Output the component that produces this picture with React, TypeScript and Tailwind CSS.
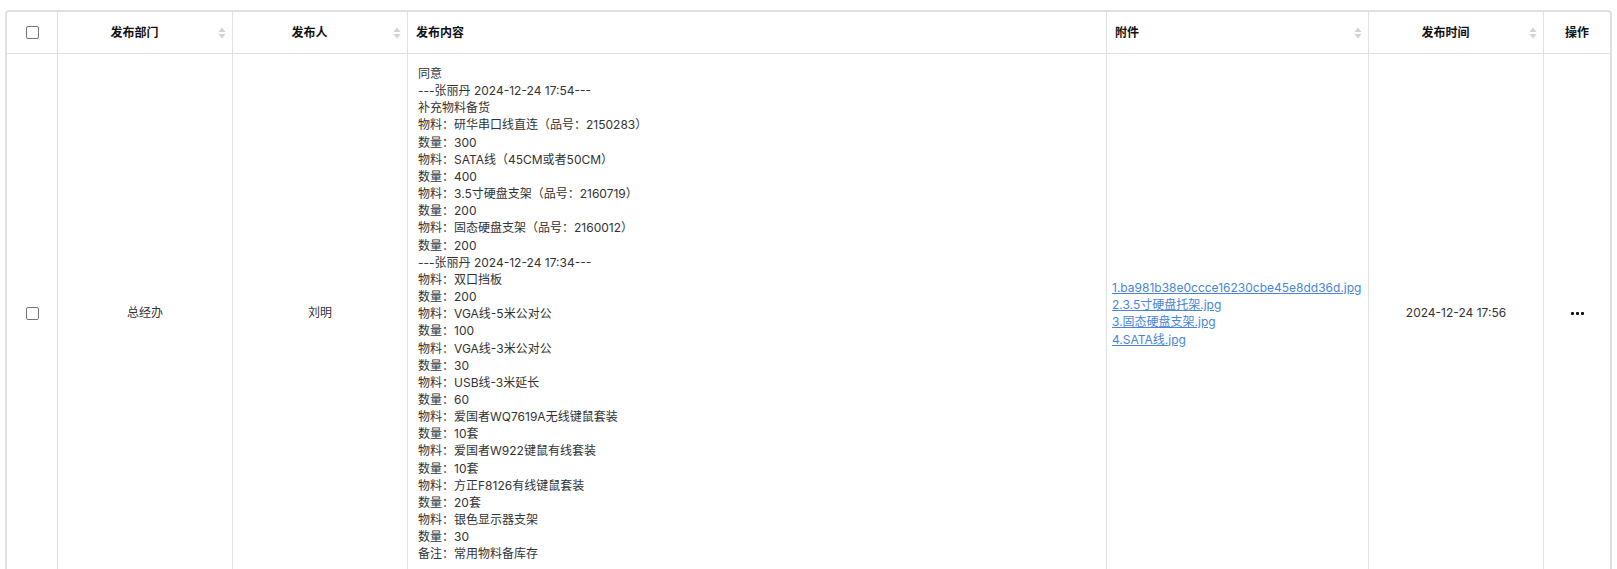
const contentLines = [
  "同意",
  "---张丽丹 2024-12-24 17:54---",
  "补充物料备货",
  "物料：研华串口线直连（品号：2150283）",
  "数量：300",
  "物料：SATA线（45CM或者50CM）",
  "数量：400",
  "物料：3.5寸硬盘支架（品号：2160719）",
  "数量：200",
  "物料：固态硬盘支架（品号：2160012）",
  "数量：200",
  "---张丽丹 2024-12-24 17:34---",
  "物料：双口挡板",
  "数量：200",
  "物料：VGA线-5米公对公",
  "数量：100",
  "物料：VGA线-3米公对公",
  "数量：30",
  "物料：USB线-3米延长",
  "数量：60",
  "物料：爱国者WQ7619A无线键鼠套装",
  "数量：10套",
  "物料：爱国者W922键鼠有线套装",
  "数量：10套",
  "物料：方正F8126有线键鼠套装",
  "数量：20套",
  "物料：银色显示器支架",
  "数量：30",
  "备注：常用物料备库存",
];

const attachments = [
  "1.ba981b38e0ccce16230cbe45e8dd36d.jpg",
  "2.3.5寸硬盘托架.jpg",
  "3.固态硬盘支架.jpg",
  "4.SATA线.jpg",
];

function Checkbox() {
  return (
    <span className="inline-block w-[13px] h-[13px] rounded-[2px] border border-[#767676] bg-white align-middle" />
  );
}

function Sorter() {
  return (
    <svg width="8" height="12" viewBox="0 0 8 12" className="shrink-0">
      <path d="M4 0.5 L7.5 5 L0.5 5 Z" fill="#d2d2d2" />
      <path d="M4 11.5 L7.5 7 L0.5 7 Z" fill="#d2d2d2" />
    </svg>
  );
}

function SortHeader({ title, center }: { title: string; center?: boolean }) {
  return (
    <div className="flex items-center pl-2 pr-[6px]">
      <span className={center ? "flex-1 text-center" : "flex-1 text-left"}>
        {title}
      </span>
      <span className="w-[23px] flex justify-end">
        <Sorter />
      </span>
    </div>
  );
}

export default function App() {
  const th = "h-[42px] border-r border-b border-[#e0e0e0] p-0 font-bold text-[#111] align-middle";
  const td = "border-r border-[#e0e0e0] p-0 align-middle";

  return (
    <div
      className="bg-white pt-[10px] px-[5px] text-[12px] text-[#333]"
      style={{ fontFamily: 'Inter, "Noto Sans CJK SC", sans-serif' }}
    >
      <div className="border-2 border-[#e0e0e0] rounded-[4px] overflow-hidden">
        <table className="table-fixed w-full border-separate border-spacing-0">
          <colgroup>
            <col className="w-[51px]" />
            <col className="w-[175px]" />
            <col className="w-[175px]" />
            <col className="w-[699px]" />
            <col className="w-[262px]" />
            <col className="w-[175px]" />
            <col className="w-[66px]" />
          </colgroup>
          <thead>
            <tr>
              <th className={th}>
                <div className="flex justify-center">
                  <Checkbox />
                </div>
              </th>
              <th className={th}>
                <SortHeader title="发布部门" center />
              </th>
              <th className={th}>
                <SortHeader title="发布人" center />
              </th>
              <th className={`${th} text-left pl-2`}>发布内容</th>
              <th className={th}>
                <SortHeader title="附件" />
              </th>
              <th className={th}>
                <SortHeader title="发布时间" center />
              </th>
              <th className="h-[42px] border-b border-[#e0e0e0] p-0 font-bold text-[#111] text-center align-middle">
                操作
              </th>
            </tr>
          </thead>
          <tbody>
            <tr>
              <td className={td}>
                <div className="flex justify-center">
                  <Checkbox />
                </div>
              </td>
              <td className={`${td} text-center`}>总经办</td>
              <td className={`${td} text-center`}>刘明</td>
              <td className={`${td} pl-[10px] pr-2 pt-[11px] pb-[10px] leading-[17.15px]`}>
                {contentLines.map((line, i) => (
                  <div key={i}>{line}</div>
                ))}
              </td>
              <td className={`${td} pl-[5px] pr-2 leading-[17.3px]`}>
                {attachments.map((name) => (
                  <div key={name}>
                    <a href="#" className="text-[#4a84d8] underline">
                      {name}
                    </a>
                  </div>
                ))}
              </td>
              <td className={`${td} text-center`}>2024-12-24 17:56</td>
              <td className="p-0 align-middle">
                <div className="flex justify-center gap-[2px] pl-[1px]">
                  <span className="w-[3px] h-[3px] rounded-[1px] bg-[#111]" />
                  <span className="w-[3px] h-[3px] rounded-[1px] bg-[#111]" />
                  <span className="w-[3px] h-[3px] rounded-[1px] bg-[#111]" />
                </div>
              </td>
            </tr>
          </tbody>
        </table>
      </div>
    </div>
  );
}
